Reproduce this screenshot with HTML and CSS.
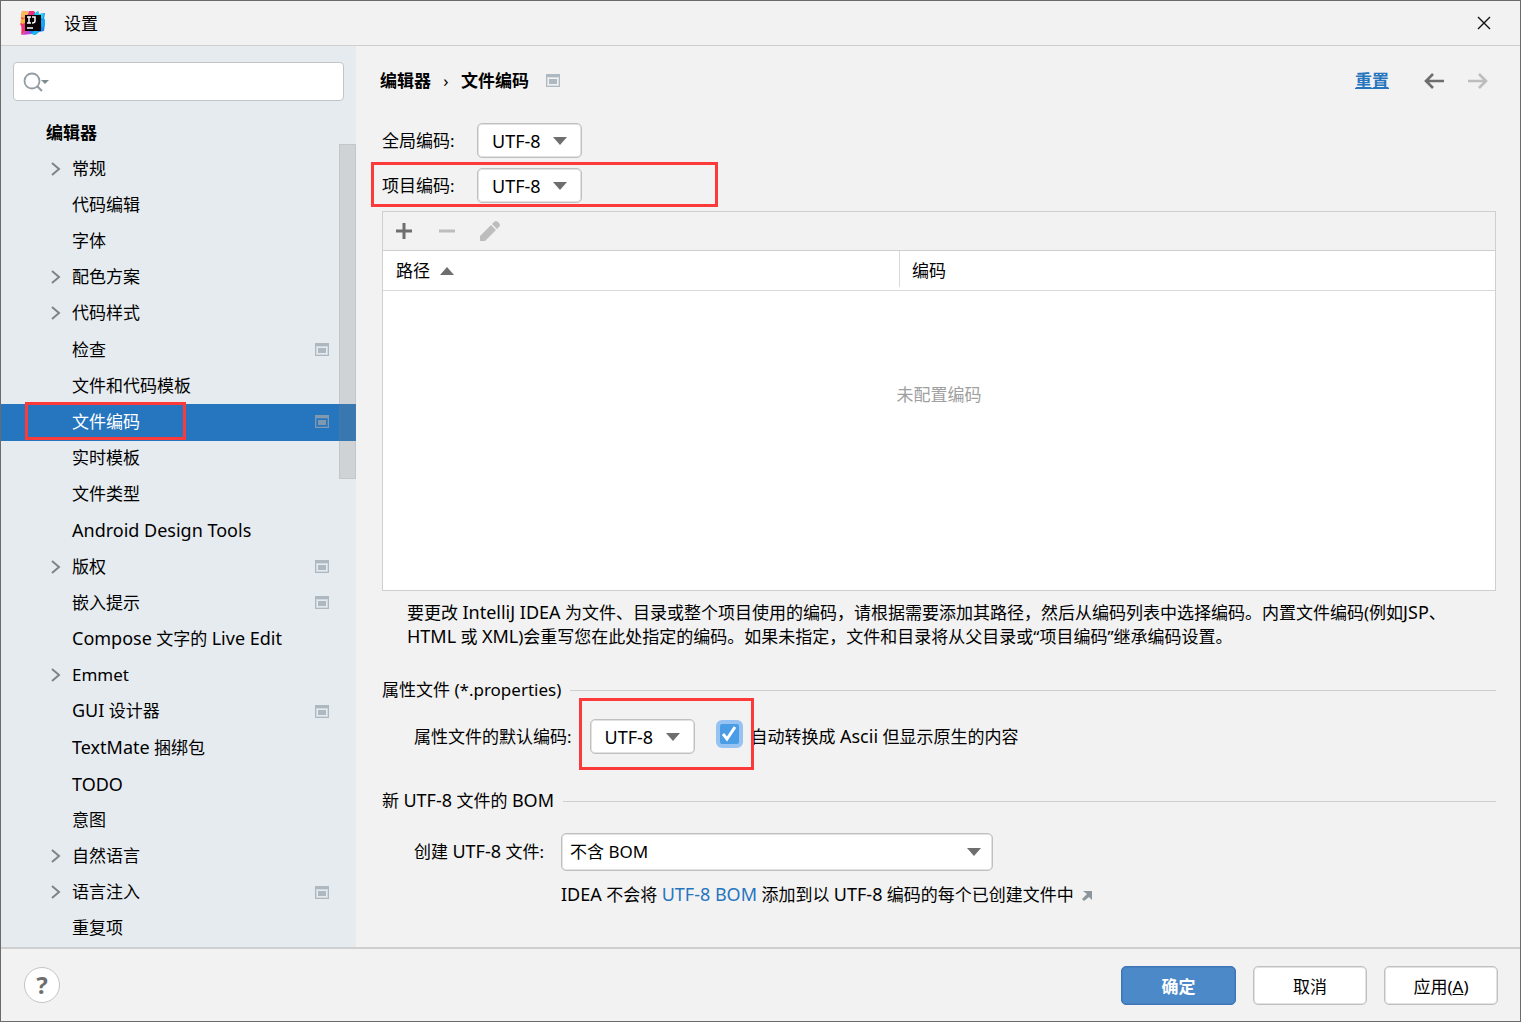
FILE: index.html
```html
<!DOCTYPE html>
<html lang="zh-CN">
<head>
<meta charset="utf-8">
<title>设置</title>
<link rel="stylesheet" href="styles.css">
</head>
<body>
<svg class="sprite" aria-hidden="true">
  <symbol id="chevron" viewBox="0 0 12 16"><path d="M2 2l7 6-7 6" fill="none" stroke="#7f8386" stroke-width="2"/></symbol>
  <symbol id="project" viewBox="0 0 14 13"><path fill-rule="evenodd" d="M0 0h14v13H0zM1 3v9h12V3z"/><path fill-rule="evenodd" opacity=".35" d="M1 3h12v9H1zM2 4v7h10V4z"/><path d="M3 5h8v5H3z"/></symbol>
  <symbol id="down" viewBox="0 0 14 8"><path d="M0 0h14L7 8z" fill="#6e6e6e"/></symbol>
</svg>
<div class="window">
  <header class="titlebar">
    <svg class="logo" viewBox="0 0 26 26" aria-hidden="true">
      <path d="M2 1l8 1 4-1 2 6-8 12-7 6 1-8-2-3 2-3-1-3z" fill="#f6532f"/>
      <path d="M2 1l8 1-6 6-3-1z" fill="#fdb75c"/>
      <path d="M9 1l5 0 3 5H8z" fill="#e8307f"/>
      <path d="M1 12l5-2v9l-4 6z" fill="#f0327a"/>
      <path d="M0 11l5-3v5l-3 1z" fill="#ffb13b"/>
      <path d="M2 25l6-7 6 4-3 2z" fill="#c53cd2"/>
      <path d="M14 4l4-3 1 3 6-1-1 6 1 5-1 7-5 1-4 3-6-3 5-4z" fill="#1685f2"/>
      <path d="M14 4l4-3 1 3 5 0-1 5-7-3z" fill="#22cdf0"/>
      <path d="M20 10l5-1v6l-3 3z" fill="#16a8f7"/>
      <path d="M11 24l4-4 4 2-4 3z" fill="#18b6f4"/>
      <path d="M5 5h16v16H5z" fill="#0a0406"/>
      <path d="M7 7h4M9 7v6M7 13h4M12 7h3v4q0 2-3 2M7 18h6" fill="none" stroke="#fff" stroke-width="1.5"/>
    </svg>
    <h1 class="title">设置</h1>
    <button class="icon-button close" type="button" aria-label="关闭"><svg viewBox="0 0 12 12"><path d="M0 0l12 12M12 0L0 12" stroke="#111" stroke-width="1.4"/></svg></button>
  </header>

  <div class="body">
    <nav class="sidebar">
      <div class="search">
        <svg class="search-icon" viewBox="0 0 26 20" aria-hidden="true"><circle cx="9" cy="9" r="7.5" fill="none" stroke="#949da3" stroke-width="1.8"/><path d="M14 14l5 5" stroke="#949da3" stroke-width="2.2"/><path d="M18 8h8l-4 4z" fill="#7f8b91"/></svg>
        <input class="search-input" type="text" aria-label="搜索">
      </div>
      <div class="tree-area">
        <ul class="tree">
          <li class="group"><a href="#">编辑器</a></li>
          <li><a href="#"><svg class="chevron"><use href="#chevron"/></svg>常规</a></li>
          <li><a href="#">代码编辑</a></li>
          <li><a href="#">字体</a></li>
          <li><a href="#"><svg class="chevron"><use href="#chevron"/></svg>配色方案</a></li>
          <li><a href="#"><svg class="chevron"><use href="#chevron"/></svg>代码样式</a></li>
          <li><a href="#">检查<svg class="project"><use href="#project"/></svg></a></li>
          <li><a href="#">文件和代码模板</a></li>
          <li class="selected"><a href="#">文件编码<svg class="project"><use href="#project"/></svg></a><span class="mark mark-tree"></span></li>
          <li><a href="#">实时模板</a></li>
          <li><a href="#">文件类型</a></li>
          <li><a href="#"><span class="latin">Android Design Tools</span></a></li>
          <li><a href="#"><svg class="chevron"><use href="#chevron"/></svg>版权<svg class="project"><use href="#project"/></svg></a></li>
          <li><a href="#">嵌入提示<svg class="project"><use href="#project"/></svg></a></li>
          <li><a href="#"><span><span class="latin">Compose</span> 文字的 <span class="latin">Live Edit</span></span></a></li>
          <li><a href="#"><svg class="chevron"><use href="#chevron"/></svg>Emmet</a></li>
          <li><a href="#"><span><span class="latin">GUI</span> 设计器</span><svg class="project"><use href="#project"/></svg></a></li>
          <li><a href="#"><span><span class="latin">TextMate</span> 捆绑包</span></a></li>
          <li><a href="#"><span class="latin">TODO</span></a></li>
          <li><a href="#">意图</a></li>
          <li><a href="#"><svg class="chevron"><use href="#chevron"/></svg>自然语言</a></li>
          <li><a href="#"><svg class="chevron"><use href="#chevron"/></svg>语言注入<svg class="project"><use href="#project"/></svg></a></li>
          <li><a href="#">重复项</a></li>
        </ul>
        <div class="scrollbar"></div>
      </div>
    </nav>

    <main class="content">
      <div class="heading">
        <h2 class="crumbs"><span>编辑器</span><span class="sep">›</span><span>文件编码</span></h2>
        <svg class="project"><use href="#project"/></svg>
        <a class="reset" href="#">重置</a>
        <button class="icon-button" type="button" aria-label="后退"><svg class="arrow" viewBox="0 0 20 16"><path d="M9 1L2 8l7 7M2 8h18" fill="none" stroke="#6e6e6e" stroke-width="2.6"/></svg></button>
        <button class="icon-button" type="button" aria-label="前进" disabled><svg class="arrow" viewBox="0 0 20 16"><path d="M11 1l7 7-7 7M18 8H0" fill="none" stroke="#bdbdbd" stroke-width="2.6"/></svg></button>
      </div>

      <div class="encodings">
        <div class="encoding-row">
          <label for="global">全局编码:</label>
          <div class="select small"><select id="global"><option>UTF-8</option></select><svg><use href="#down"/></svg></div>
        </div>
        <div class="encoding-row">
          <label for="projectenc">项目编码:</label>
          <div class="select small"><select id="projectenc"><option>UTF-8</option></select><svg><use href="#down"/></svg></div>
          <span class="mark mark-row"></span>
        </div>
      </div>

      <section class="paths">
        <div class="toolbar">
          <button class="icon-button" type="button" aria-label="添加"><svg viewBox="0 0 22 22"><path d="M3 11h16M11 3v16" stroke="#6e6e6e" stroke-width="3"/></svg></button>
          <button class="icon-button" type="button" aria-label="移除" disabled><svg viewBox="0 0 22 22"><path d="M3 11h16" stroke="#bdbdbd" stroke-width="3"/></svg></button>
          <button class="icon-button" type="button" aria-label="编辑" disabled><svg viewBox="0 0 22 22"><path d="M1 16L12 5l5 5L6 21H1zM13 4l2-2q2-2 4 0l1 1q2 2 0 4l-2 2z" fill="#bdbdbd"/></svg></button>
        </div>
        <table class="path-table">
          <thead><tr>
            <th class="path-col"><span class="th-label">路径<svg viewBox="0 0 14 8"><path d="M0 8h14L7 0z" fill="#6e6e6e"/></svg></span></th>
            <th><span class="th-label">编码</span></th>
          </tr></thead>
          <tbody><tr><td class="empty" colspan="2">未配置编码</td></tr></tbody>
        </table>
      </section>

      <p class="note">要更改 <span class="latin">IntelliJ IDEA</span> 为文件、目录或整个项目使用的编码，请根据需要添加其路径，然后从编码列表中选择编码。内置文件编码(例如<span class="latin">JSP</span>、<br><span class="latin">HTML</span> 或 <span class="latin">XML</span>)会重写您在此处指定的编码。如果未指定，文件和目录将从父目录或“项目编码”继承编码设置。</p>

      <h3 class="section-title">属性文件 (*.properties)</h3>
      <div class="properties-row">
        <label for="propenc">属性文件的默认编码:</label>
        <div class="properties-controls">
          <div class="select small"><select id="propenc"><option>UTF-8</option></select><svg><use href="#down"/></svg></div>
          <div class="check">
            <input id="ascii" type="checkbox" checked>
            <svg viewBox="0 0 20 20" aria-hidden="true"><path d="M4 10l4 5 8-12" fill="none" stroke="#fff" stroke-width="3"/></svg>
          </div>
          <span class="mark mark-props"></span>
        </div>
        <label class="ascii-label" for="ascii">自动转换成 <span class="latin">Ascii</span> 但显示原生的内容</label>
      </div>

      <h3 class="section-title bom-title"><span>新 <span class="latin">UTF-8</span> 文件的 <span class="latin">BOM</span></span></h3>
      <div class="bom">
        <label for="bom">创建 <span class="latin">UTF-8</span> 文件:</label>
        <div class="select wide"><select id="bom"><option>不含 BOM</option></select><svg><use href="#down"/></svg></div>
        <p class="help-text"><span class="latin">IDEA</span> 不会将 <a class="latin" href="#">UTF-8 BOM</a> 添加到以 <span class="latin">UTF-8</span> 编码的每个已创建文件中 <svg viewBox="0 0 10 10" aria-hidden="true"><path d="M1 0h9v9L7 6l-5 4-2-2 5-5z" fill="#8c959b"/></svg></p>
      </div>
    </main>
  </div>

  <footer class="footer">
    <button class="help" type="button" aria-label="帮助">?</button>
    <button class="button primary" type="button">确定</button>
    <button class="button" type="button">取消</button>
    <button class="button" type="button">应用(<u>A</u>)</button>
  </footer>
</div>
</body>
</html>
```
FILE: styles.css
```css
* { box-sizing: border-box; }

body {
  margin: 0;
  font: 17px/24px "Noto Sans", "Noto Sans CJK SC", sans-serif;
  color: #000;
  background: #f2f2f2;
}

h1, h2, h3, p, ul { margin: 0; padding: 0; font: inherit; }
a { color: inherit; text-decoration: none; }
button, input, select { font: inherit; color: inherit; }
svg { flex: none; }

.sprite { display: none; }

/* Latin words are set a size up beside the Chinese text */
.latin { font-size: 18px; line-height: 20px; }

.window {
  display: flex;
  flex-direction: column;
  min-height: 100vh;
  border: 1px solid #6b6b6b;
}

.icon-button {
  display: flex;
  padding: 0;
  border: 0;
  background: none;
}

.project { width: 14px; height: 13px; fill: #adb8c0; }

/* Outlines that call attention to a setting */
.mark {
  position: absolute;
  border: 3px solid #fc3a39;
  pointer-events: none;
}
.mark-tree { left: 24px; top: -2px; bottom: 1px; width: 161px; }
.mark-row { left: -11px; top: -6px; bottom: -4px; width: 347px; }
.mark-props { left: -11px; top: -21px; bottom: -16px; right: -11px; }

/* Title bar */
.titlebar {
  display: flex;
  align-items: center;
  height: 45px;
  padding: 0 30px 0 19px;
  border-bottom: 1px solid #cfcfcf;
}
.logo { width: 26px; height: 26px; margin-right: 18px; }
.title { padding-top: 2px; }
.close { margin-left: auto; }
.close svg { width: 12px; height: 12px; overflow: visible; }

.body { display: flex; flex: 1; }

/* Sidebar */
.sidebar {
  display: flex;
  flex-direction: column;
  flex: none;
  width: 355px;
  background: #e6ebef;
}
.search { display: grid; align-items: center; margin: 16px 12px 14px; }
.search > * { grid-area: 1 / 1; }
.search-input {
  width: 100%;
  height: 39px;
  padding: 0 10px 0 40px;
  border: 1px solid #c4c4c4;
  border-radius: 4px;
  background: #fff;
}
.search-icon { z-index: 1; width: 26px; height: 20px; margin-left: 10px; }
.tree-area { position: relative; display: flex; flex: 1; }
.tree {
  display: flex;
  flex-direction: column;
  flex: 1;
  list-style: none;
}
.tree li { position: relative; display: flex; flex: 1; min-height: 24px; }
.tree a {
  display: flex;
  align-items: center;
  flex: 1;
  padding: 0 27px 1px 71px;
}
.tree .group a { padding-left: 45px; font-weight: 700; }
.chevron { width: 12px; height: 16px; margin: 0 10px 0 -22px; }
.tree .project { margin-left: auto; }
.tree .selected { background: #2675bf; color: #fff; }
.selected .project { fill: #8099ae; }
.scrollbar {
  position: absolute;
  right: 0;
  top: 29px;
  width: 17px;
  height: 335px;
  border: 1px solid #80808022;
  background: #80808038;
}

/* Settings page */
.content {
  display: flex;
  flex-direction: column;
  flex: 1;
  min-width: 0;
  padding: 0 24px 40px 26px;
}
.heading { display: flex; align-items: center; height: 69px; margin-left: -2px; }
.crumbs { display: flex; font-weight: 700; }
.sep { width: 30px; text-align: center; font-weight: 400; }
.heading .project { margin-left: 17px; }
.reset { margin: 0 35px 0 auto; color: #2675bf; font-weight: 700; text-decoration: underline; }
.arrow { width: 20px; height: 16px; }
.heading .icon-button + .icon-button { margin-left: 24px; }
.heading .icon-button:last-child { margin-right: 8px; }

.encodings { display: grid; gap: 10px; margin: 8px 0; }
.encoding-row {
  position: relative;
  display: grid;
  grid-template-columns: 95px auto;
  justify-content: start;
  align-items: center;
}

.select { display: grid; align-items: center; }
.select > * { grid-area: 1 / 1; }
.select svg {
  justify-self: end;
  width: 14px;
  height: 8px;
  margin-right: 15px;
  pointer-events: none;
}
.select select {
  appearance: none;
  width: 100%;
  height: 35px;
  padding: 0 14px;
  border: 1px solid #c0c0c0;
  border-radius: 5px;
  background: #fff;
  box-shadow: inset 0 0 0 1px #e2e2e2;
  font-size: 18px;
}
.small { width: 105px; }
.wide { width: 432px; }
.wide svg { margin-right: 12px; }
.select.wide select { height: 38px; padding: 0 8px; font-size: 17px; }

.paths {
  display: flex;
  flex-direction: column;
  flex: 1;
  border: 1px solid #cfcfcf;
  background: #fff;
}
.toolbar {
  display: flex;
  align-items: center;
  gap: 21px;
  height: 39px;
  padding: 0 10px;
  border-bottom: 1px solid #cfcfcf;
  background: #f2f2f2;
}
.toolbar svg { width: 22px; height: 22px; }
.path-table { width: 100%; border-collapse: collapse; table-layout: fixed; }
.path-table th {
  height: 39px;
  padding: 0 0 2px;
  border-bottom: 1px solid #d9d9d9;
  font-weight: 400;
  text-align: left;
}
.path-col { width: 46.5%; }
.th-label { display: flex; align-items: center; gap: 10px; height: 36px; padding: 3px 0 0 12px; }
.th-label svg { width: 14px; height: 8px; }
.path-col .th-label { padding-left: 13px; border-right: 1px solid #d9d9d9; }
.empty { padding: 92px 0 0; color: #a0a0a0; text-align: center; }

.note { padding: 10px 0 0 25px; }

.section-title { display: flex; align-items: center; gap: 9px; margin-top: 29px; }
.section-title::after { content: ""; flex: 1; height: 1px; background: #cfcfcf; }
.bom-title { margin-top: 35px; }

.properties-row { display: flex; align-items: center; margin-top: 17px; padding-left: 32px; }
.properties-controls { position: relative; display: flex; margin-left: 18px; }
.check { display: grid; margin: 1px 0 0 21px; width: 27px; height: 28px; place-items: center; }
.check > * { grid-area: 1 / 1; }
.check input {
  appearance: none;
  width: 27px;
  height: 28px;
  margin: 0;
  border: 4px solid #97c3f3;
  border-radius: 6px;
  background: #4a9de4;
}
.check svg { z-index: 1; width: 20px; height: 20px; pointer-events: none; }
.ascii-label { margin-left: 8px; }

.bom {
  display: grid;
  grid-template-columns: auto auto;
  justify-content: start;
  align-items: center;
  gap: 12px 17px;
  margin-top: 20px;
  padding-left: 32px;
}
.help-text { grid-column: 2; }
.help-text a { color: #2675bf; }
.help-text svg { width: 10px; height: 10px; margin-left: 4px; }

/* Footer */
.footer {
  display: flex;
  align-items: center;
  gap: 17px;
  height: 74px;
  padding: 0 22px 0 23px;
  border-top: 2px solid #cfcfcf;
}
.help {
  width: 36px;
  height: 36px;
  margin-right: auto;
  padding: 0;
  border: 1px solid #c4c4c4;
  border-radius: 50%;
  background: #fff;
  color: #6e6e6e;
  font-size: 24px;
  font-weight: 700;
}
.button {
  width: 114px;
  height: 39px;
  padding: 3px 0 0;
  border: 1px solid #c0c0c0;
  border-radius: 5px;
  background: #fff;
  box-shadow: inset 0 0 0 1px #e2e2e2;
}
.primary {
  width: 115px;
  border-color: #3d75b5;
  background: #4c89c8;
  box-shadow: inset 0 0 0 1px #447fbe;
  color: #fff;
  font-weight: 700;
}
```
